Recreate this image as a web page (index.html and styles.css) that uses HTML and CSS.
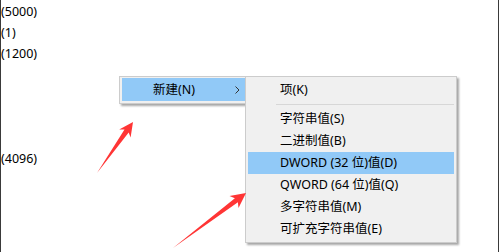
FILE: index.html
```html
<!DOCTYPE html>
<html lang="zh-CN">
<head>
    <meta charset="UTF-8">
    <title>Registry New Value</title>
    <link rel="stylesheet" href="styles.css">
</head>
<body>
    <div class="pane">
        <div class="values">
            <div class="row">(5000)</div>
            <div class="row">(1)</div>
            <div class="row">(1200)</div>
            <div class="row"></div>
            <div class="row"></div>
            <div class="row"></div>
            <div class="row"></div>
            <div class="row">(4096)</div>
        </div>

        <div class="menu menu-main">
            <div class="menu-item active">
                <span>新建(N)</span>
                <svg class="chevron" width="5" height="8" viewBox="0 0 5 8"><polyline points="0.5,0.5 4,4 0.5,7.5" fill="none" stroke="#333" stroke-width="1"/></svg>
            </div>
        </div>

        <div class="menu menu-sub">
            <div class="menu-item">项(K)</div>
            <div class="sep"></div>
            <div class="menu-item">字符串值(S)</div>
            <div class="menu-item">二进制值(B)</div>
            <div class="menu-item active">DWORD (32 位)值(D)</div>
            <div class="menu-item">QWORD (64 位)值(Q)</div>
            <div class="menu-item">多字符串值(M)</div>
            <div class="menu-item">可扩充字符串值(E)</div>
        </div>

        <svg class="arrows" width="499" height="252" viewBox="0 0 499 252">
            <polygon points="97,173 128.7,132.5 130.6,137.5 133,122 119.2,129.4 124.5,129.6" />
            <polygon points="173,248 237.9,202.2 238.5,208 246,193 229.5,196 234.9,198.2" />
        </svg>
    </div>
</body>
</html>
```

FILE: styles.css
```css
body {
    margin: 0;
    background: #fff;
    font-family: "Noto Sans", "Noto Sans CJK SC", sans-serif;
    font-size: 12.5px;
    color: #000;
}

div.pane {
    position: relative;
    width: 499px;
    height: 252px;
    box-sizing: border-box;
    border-left: 1px solid #3a3a3a;
    border-right: 1px solid #3a3a3a;
    overflow: hidden;
}

div.values {
    padding-top: 1px;
}

div.values .row {
    height: 21px;
    line-height: 21px;
    white-space: nowrap;
}

div.menu {
    position: absolute;
    background: #f0f0f0;
    border: 1px solid #cccccc;
    padding: 2px;
    box-shadow: 2px 2px 2px rgba(0, 0, 0, 0.35);
}

div.menu-main {
    left: 118px;
    top: 76px;
    width: 124px;
    padding-top: 1px;
}

div.menu-sub {
    left: 244px;
    top: 76px;
    width: 206px;
    z-index: 1;
}

div.menu-item {
    height: 22px;
    line-height: 22px;
    padding-left: 32px;
    white-space: nowrap;
    display: flex;
    align-items: center;
}

div.menu-main div.menu-item {
    height: 23px;
    padding-left: 31px;
}

div.menu-item.active {
    background: #91c9f7;
}

div.menu-item .chevron {
    margin-left: auto;
    margin-right: 6px;
}

div.sep {
    height: 7px;
    margin-left: 28px;
    display: flex;
    align-items: center;
}

div.sep::after {
    content: "";
    height: 1px;
    flex: 1 0 0px;
    background: #d7d7d7;
}

svg.arrows {
    position: absolute;
    left: -1px;
    top: 0px;
    z-index: 2;
    fill: #ff3535;
}
```
